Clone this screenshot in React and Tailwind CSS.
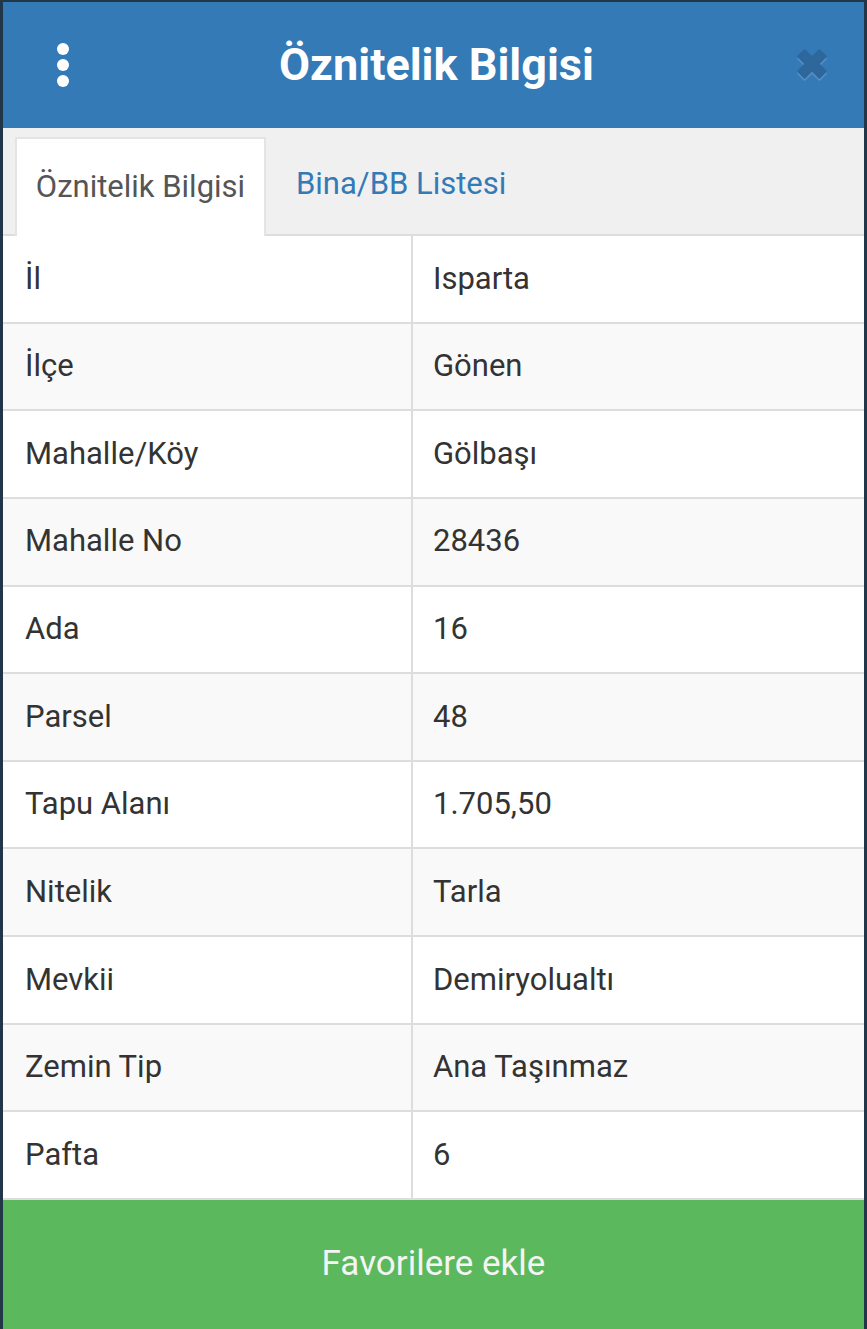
const rows = [
  ["İl", "Isparta"],
  ["İlçe", "Gönen"],
  ["Mahalle/Köy", "Gölbaşı"],
  ["Mahalle No", "28436"],
  ["Ada", "16"],
  ["Parsel", "48"],
  ["Tapu Alanı", "1.705,50"],
  ["Nitelik", "Tarla"],
  ["Mevkii", "Demiryolualtı"],
  ["Zemin Tip", "Ana Taşınmaz"],
  ["Pafta", "6"],
];

export default function App() {
  return (
    <div
      className="h-[1329px] w-full flex flex-col border-x-[3px] border-t-2 border-[#22364a] bg-white overflow-hidden"
      style={{ fontFamily: "Roboto, 'Noto Sans', sans-serif" }}
    >
      {/* Header */}
      <div className="h-[126px] shrink-0 bg-[#337ab7] flex items-center justify-between pl-[54px] pr-[34px]">
        <div className="flex flex-col gap-[4px] items-center w-[12px]">
          <span className="block w-[12px] h-[12px] rounded-full bg-white" />
          <span className="block w-[12px] h-[12px] rounded-full bg-white" />
          <span className="block w-[12px] h-[12px] rounded-full bg-white" />
        </div>
        <h1 className="text-white font-bold text-[45px] ml-[10px]">Öznitelik Bilgisi</h1>
        <svg width="36" height="38" viewBox="0 0 34 36">
          <path d="M4 10 L10 4 L17 11 L24 4 L30 10 L23 17 L30 24 L24 30 L17 23 L10 30 L4 24 L11 17 Z" fill="#5a8fc4" strokeLinejoin="round" stroke="#5a8fc4" strokeWidth="2" transform="translate(0 2)" />
          <path d="M4 10 L10 4 L17 11 L24 4 L30 10 L23 17 L30 24 L24 30 L17 23 L10 30 L4 24 L11 17 Z" fill="#2d679c" strokeLinejoin="round" stroke="#2d679c" strokeWidth="2" />
        </svg>
      </div>

      {/* Tabs */}
      <div className="h-[108px] shrink-0 bg-[#f0f0f0] border-b-2 border-[#dddddd] flex items-end pl-[12px]">
        <div className="h-[99px] w-[251px] bg-white border-2 border-b-0 border-[#e4e4e4] flex items-center justify-center text-[#555] text-[31px] -mb-[2px]">
          Öznitelik Bilgisi
        </div>
        <div className="h-[99px] px-[30px] flex items-center text-[#337ab7] text-[31px]">
          Bina/BB Listesi
        </div>
      </div>

      {/* Table */}
      <div className="flex-1 flex flex-col">
        {rows.map(([k, v], i) => (
          <div
            key={k}
            className={`flex-1 flex border-b-2 border-[#dddddd] text-[#333] text-[31px] ${
              i % 2 === 0 ? "bg-white" : "bg-[#f9f9f9]"
            }`}
          >
            <div className="w-[410px] shrink-0 flex items-center pl-[22px] border-r-2 border-[#dddddd]">{k}</div>
            <div className="flex-1 flex items-center pl-[20px]">{v}</div>
          </div>
        ))}
      </div>

      {/* Button */}
      <button className="h-[129px] shrink-0 bg-[#5cb85c] text-[#f4f4f4] text-[35px] w-full">
        Favorilere ekle
      </button>
    </div>
  );
}
